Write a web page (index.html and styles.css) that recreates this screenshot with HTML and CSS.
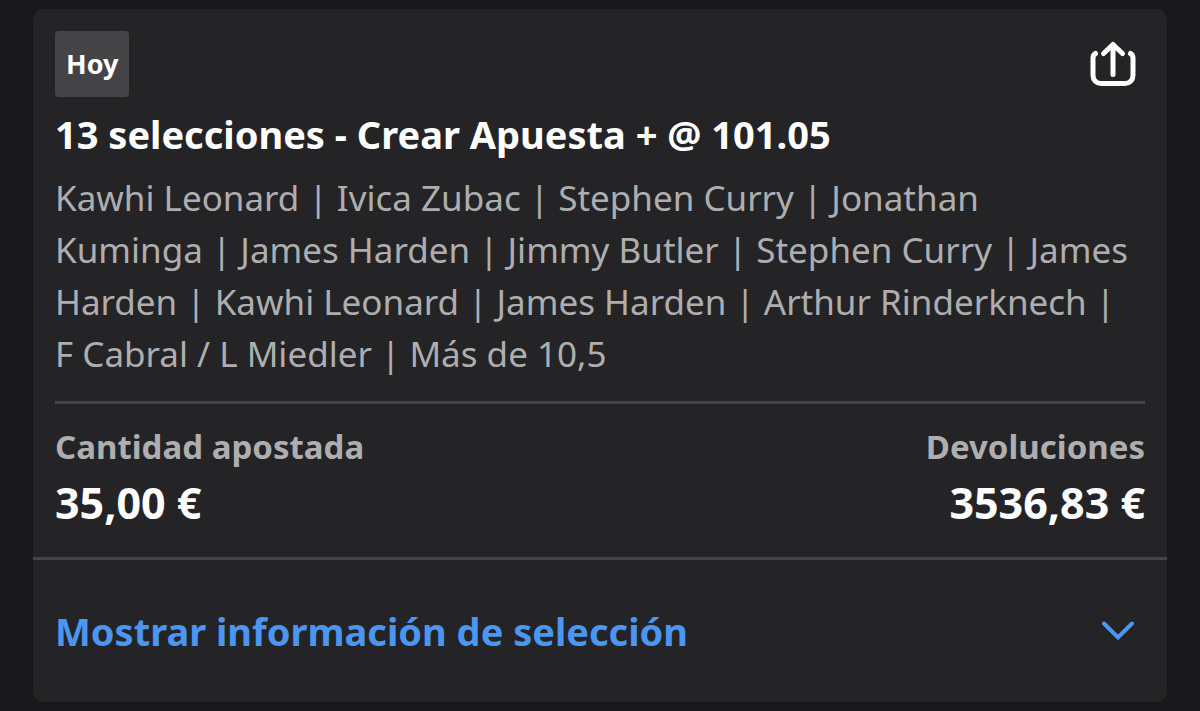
FILE: index.html
```html
<!DOCTYPE html>
<html lang="es">
<head>
<meta charset="utf-8">
<meta name="viewport" content="width=device-width, initial-scale=1">
<title>Mis apuestas</title>
<link rel="stylesheet" href="styles.css">
</head>
<body>
<main class="page">
  <article class="bet-card">
    <div class="bet-body">
      <header class="bet-header">
        <span class="badge">Hoy</span>
        <button class="share" type="button" aria-label="Compartir">
          <svg class="share-icon" viewBox="0 0 46 46" aria-hidden="true">
            <path d="M5.500 12.500Q3 14 3 17V34.500a8 8 0 0 0 8 8h24a8 8 0 0 0 8-8V17Q43 14 40.500 12.500M23 33.500V4M13.500 12.500L23 3.500l9.500 9"/>
          </svg>
        </button>
      </header>
      <h1 class="bet-title">13 selecciones - Crear Apuesta + @ 101.05</h1>
      <p class="selections">Kawhi Leonard | Ivica Zubac | Stephen Curry | Jonathan<br>
        Kuminga | James Harden | Jimmy Butler | Stephen Curry | James<br>
        Harden | Kawhi Leonard | James Harden | Arthur Rinderknech |<br>
        F Cabral / L Miedler | Más de 10,5</p>
      <dl class="amounts">
        <div class="amount">
          <dt class="amount-label">Cantidad apostada</dt>
          <dd class="amount-value">35,00 €</dd>
        </div>
        <div class="amount amount-end">
          <dt class="amount-label">Devoluciones</dt>
          <dd class="amount-value">3536,83 €</dd>
        </div>
      </dl>
    </div>
    <button class="toggle" type="button" aria-expanded="false">
      <span>Mostrar información de selección</span>
      <svg class="chevron" viewBox="0 0 34 20" aria-hidden="true"><path d="M3 2.500l14 14 14-14"/></svg>
    </button>
  </article>
</main>
</body>
</html>
```

FILE: styles.css
```css
* { box-sizing: border-box; }

body {
  margin: 0;
  background: #18181a;
  color: #fff;
  font-family: "Noto Sans", sans-serif;
}

.page { padding: 9px 33px; }

.bet-card {
  background: #242426;
  border-radius: 10px;
  overflow: hidden;
}

.bet-body { padding: 22px 22px 22px; }

.bet-header {
  display: flex;
  justify-content: space-between;
  align-items: center;
}

.badge {
  padding: 16px 11px;
  border-radius: 4px;
  background: #444446;
  font-size: 27px;
  font-weight: 700;
  line-height: 34px;
}

.share {
  padding: 0 9px;
  border: 0;
  background: none;
  color: inherit;
}

.share-icon { display: block; width: 46px; }

.share-icon path,
.chevron path {
  fill: none;
  stroke: currentColor;
  stroke-width: 4;
  stroke-linecap: round;
  stroke-linejoin: round;
}

.share-icon path { stroke-width: 5; }

.chevron path { stroke-linejoin: miter; }

.bet-title {
  margin: 11px 0 12px;
  font-size: 38px;
  font-weight: 700;
  line-height: 52px;
}

.selections {
  margin: 0;
  color: #aeaeb0;
  font-size: 35px;
  line-height: 52px;
}

.amounts {
  display: flex;
  justify-content: space-between;
  margin: 21px 0 0;
  padding-top: 19px;
  border-top: 3px solid #444446;
}

.amount-end { text-align: right; }

.amount-label {
  color: #aeaeb0;
  font-size: 33px;
  font-weight: 700;
  line-height: 48px;
}

.amount-value {
  margin: 0;
  font-size: 43px;
  font-weight: 700;
  line-height: 64px;
}

.toggle {
  display: flex;
  justify-content: space-between;
  align-items: center;
  width: 100%;
  padding: 45px 32px 45px 22px;
  border: 0;
  border-top: 3px solid #444446;
  background: none;
  color: #4a96f0;
  font: 700 38px/52px "Noto Sans", sans-serif;
  text-align: left;
}

.chevron { width: 34px; }
```
